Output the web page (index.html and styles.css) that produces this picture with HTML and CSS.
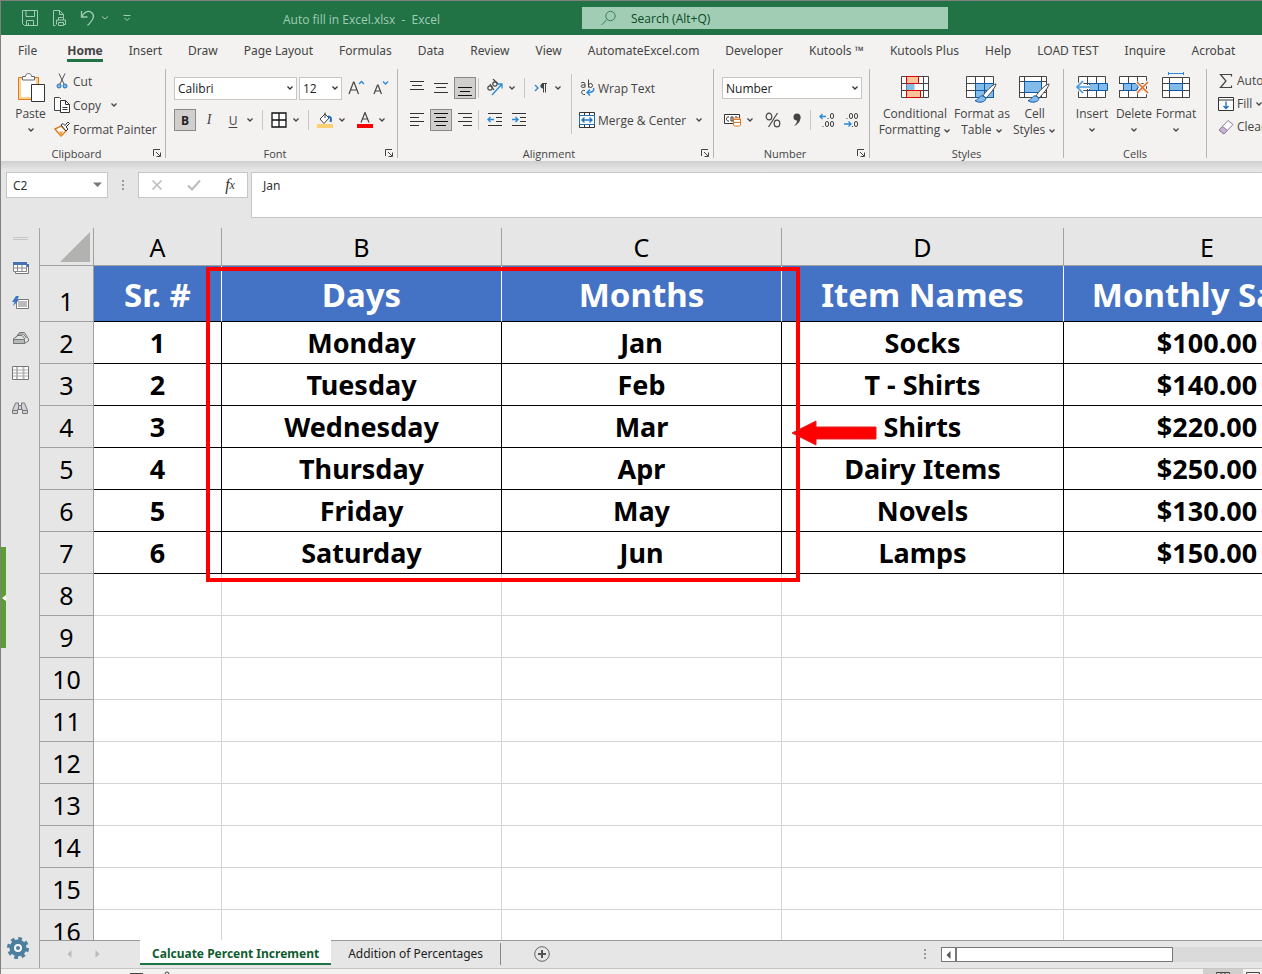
FILE: index.html
```html
<!DOCTYPE html>
<html lang="en">

<head>
    <meta charset="UTF-8">
    <meta name="viewport" content="width=device-width, initial-scale=1.0">
    <title>Auto fill in Excel.xlsx - Excel</title>
    <link rel="stylesheet" href="styles.css">
</head>

<body>

    <!-- Shared icons -->
    <svg class="defs" width="0" height="0" aria-hidden="true">
        <symbol id="chev" viewBox="0 0 8 6"><path d="M1.5 1.5 4 4l2.5-2.5" fill="none" stroke="#444" stroke-width="1.3" /></symbol>
        <symbol id="launch" viewBox="0 0 10 10"><path d="M1.5 8V1.5H8M4 4l4 4M8.500 4.500v4h-4" fill="none" stroke="#444" /></symbol>
        <symbol id="cells" viewBox="0 0 28 22"><path d="M.5.5h27v21H.5zM.5 7.500h27M.5 14.500h27M9.500.5v21M18.500.5v21" fill="#fff" stroke="#444" /></symbol>
        <symbol id="brush" viewBox="0 0 22 20"><path d="M21 1C18 1 10 9 8 13l3 2C14 12 21 4 21 1z" fill="#fff" stroke="#444" /><path d="M8 13c-4-1-4 4-8 4.500 3 3 11 2 11-2.500z" fill="#83bcea" stroke="#0f5aa8" /></symbol>
    </svg>

    <div class="app">

        <!-- Title bar -->
        <header class="titlebar">
            <div class="quick">
                <button aria-label="Save"><svg width="18" height="18" viewBox="0 0 18 18"><path d="M1.500 1.500h15v15h-13l-2-2zM5 1.500v6h8.500v-6M5.500 16.500v-5h7v5M7.500 14v2.500" /></svg></button>
                <button aria-label="Print preview"><svg width="18" height="18" viewBox="0 0 18 18"><path d="M5.500 16.500h-2v-15h6l4 4v2.500M9.500 1.500v4h4M8.500 11V8.500h5V11M6.500 15.500V11h9v4.500h-2M8.500 13.500h5v3h-5z" /></svg></button>
                <button aria-label="Undo"><svg width="18" height="18" viewBox="0 0 18 18"><path d="M2.500 2v6h6M2.500 8C5 3 9 1 12.500 3.500s2.500 7-4 13" stroke-width="1.300" /></svg></button>
                <button class="narrow" aria-label="Undo list"><svg width="8" height="6" viewBox="0 0 8 6"><path d="M1 1.500 4 4l3-2.500" /></svg></button>
                <button class="narrow last" aria-label="Customize toolbar"><svg width="8" height="8" viewBox="0 0 8 8"><path d="M.5 1.500h7M1.500 4 4 6.500 6.500 4" /></svg></button>
            </div>
            <div class="doc-title">Auto fill in Excel.xlsx&nbsp; -&nbsp; Excel</div>
            <label class="search">
                <svg width="16" height="16" viewBox="0 0 16 16"><circle cx="9.500" cy="6" r="4.700" /><path d="M6 9.500.5 15" /></svg>
                <input type="text" placeholder="Search (Alt+Q)" aria-label="Search">
            </label>
        </header>

        <!-- Ribbon tabs -->
        <nav class="tabs">
            <a href="#" class="file">File</a>
            <a href="#" class="active">Home</a>
            <a href="#">Insert</a>
            <a href="#">Draw</a>
            <a href="#">Page Layout</a>
            <a href="#">Formulas</a>
            <a href="#">Data</a>
            <a href="#">Review</a>
            <a href="#">View</a>
            <a href="#">AutomateExcel.com</a>
            <a href="#">Developer</a>
            <a href="#">Kutools ™</a>
            <a href="#">Kutools Plus</a>
            <a href="#">Help</a>
            <a href="#">LOAD TEST</a>
            <a href="#">Inquire</a>
            <a href="#">Acrobat</a>
        </nav>

        <!-- Ribbon -->
        <div class="ribbon">

            <section class="group clipboard">
                <div class="group-body">
                    <button class="big">
                        <svg width="28" height="31" viewBox="0 0 28 31"><path d="M1.500 5.500h20v22h-20z" fill="#fdd28c" stroke="#dd7b1e" /><path d="M4 7h15v18H4z" fill="#fff" /><path d="M5.500 8V4.500h3c0-4 6-4 6 0h3V8z" fill="#fff" stroke="#666" /><path d="M14.500 12.500h13v17h-13z" fill="#fff" stroke="#333" /></svg>
                        <span>Paste</span>
                        <svg class="chev"><use href="#chev" /></svg>
                    </button>
                    <div class="stack">
                        <button class="item"><svg width="16" height="16" viewBox="0 0 16 16"><path d="M5 .5 10 11M11 .5 6 11" fill="none" stroke="#555" /><circle cx="5" cy="13" r="2" fill="#83bcea" stroke="#1e6fbe" /><circle cx="11" cy="13" r="2" fill="#83bcea" stroke="#1e6fbe" /></svg>Cut</button>
                        <button class="item"><svg width="16" height="16" viewBox="0 0 16 16"><path d="M6 13.500H.5v-13h5L7 2" fill="#fff" stroke="#444" /><path d="M6.500 3.500h5l4 4v8h-9zM11.500 3.500v4h4M8.500 10.500h5M8.500 12.500h5" fill="#fff" stroke="#333" /></svg>Copy <svg class="chev"><use href="#chev" /></svg></button>
                        <button class="item"><svg width="16" height="16" viewBox="0 0 16 16"><path d="M1 8 7 5l5 5-5 5z" fill="#fff" stroke="#dd7b1e" stroke-width="1.400" /><path d="M4 11.500 9 10l-2 5z" fill="#f9a03f" /><path d="m7 4 2-1.500 2 2L14 1l1.500 1.500L12 6l2 2-2 2z" fill="#fff" stroke="#333" /></svg>Format Painter</button>
                    </div>
                </div>
                <footer><span>Clipboard</span><button aria-label="Clipboard options"><svg width="10" height="10"><use href="#launch" /></svg></button></footer>
            </section>

            <section class="group font">
                <div class="group-body rows">
                    <div class="row">
                        <select class="family" aria-label="Font"><option>Calibri</option></select>
                        <select class="size" aria-label="Font size"><option>12</option></select>
                        <button class="tb" aria-label="Increase font size"><svg width="18" height="18" viewBox="0 0 18 18"><path d="m2 15 4.500-12h.5l4.500 12M3.500 11h6.500" fill="none" stroke="#444" stroke-width="1.200" /><path d="m12 5 2.500-2.500L17 5" fill="none" stroke="#2b88d8" stroke-width="1.300" /></svg></button>
                        <button class="tb" aria-label="Decrease font size"><svg width="18" height="18" viewBox="0 0 18 18"><path d="m3 15 3.500-9h.5l3.500 9M4.500 12h5" fill="none" stroke="#444" stroke-width="1.200" /><path d="m12 2.500 2.500 2.500L17 2.500" fill="none" stroke="#2b88d8" stroke-width="1.300" /></svg></button>
                    </div>
                    <div class="row">
                        <button class="tb on bold">B</button>
                        <button class="tb italic">I</button>
                        <div class="split"><button class="tb underline">U</button><button class="dd" aria-label="Underline styles"><svg class="chev"><use href="#chev" /></svg></button></div>
                        <i class="sep"></i>
                        <div class="split"><button class="tb" aria-label="Borders"><svg width="16" height="16" viewBox="0 0 16 16"><path d="M1 1h14v14H1zM8 1v14M1 8h14" fill="#fff" stroke="#111" stroke-width="1.300" /></svg></button><button class="dd" aria-label="Border list"><svg class="chev"><use href="#chev" /></svg></button></div>
                        <i class="sep"></i>
                        <div class="split"><button class="tb" aria-label="Fill color"><svg width="16" height="16" viewBox="0 0 16 16"><path d="m3 7 5-5 4 4-5 5.500zM8 2V.5M8 2v4" fill="#fff" stroke="#444" /><path d="M11 4.500c3 0 3.500 2 2.500 5.500" fill="none" stroke="#1e6fbe" stroke-width="2" /><path d="M0 12h16v4H0z" fill="#fbd174" /></svg></button><button class="dd" aria-label="Fill color list"><svg class="chev"><use href="#chev" /></svg></button></div>
                        <div class="split"><button class="tb" aria-label="Font color"><svg width="16" height="16" viewBox="0 0 16 16"><path d="m4 10.500 4-10 4 10M5.500 7h5" fill="none" stroke="#444" stroke-width="1.200" /><path d="M0 12h16v4H0z" fill="#f00" /></svg></button><button class="dd" aria-label="Font color list"><svg class="chev"><use href="#chev" /></svg></button></div>
                    </div>
                </div>
                <footer><span>Font</span><button aria-label="Font options"><svg width="10" height="10"><use href="#launch" /></svg></button></footer>
            </section>

            <section class="group alignment">
                <div class="group-body">
                    <div class="rows align-left">
                        <div class="row">
                            <button class="tb" aria-label="Top align"><svg width="16" height="16" viewBox="0 0 16 16"><path d="M1 1.500h14M3 5.500h10M1 9.500h14" stroke="#333" /></svg></button>
                            <button class="tb" aria-label="Middle align"><svg width="16" height="16" viewBox="0 0 16 16"><path d="M1 3.500h14M3 7.500h10M1 12.500h14" stroke="#333" /></svg></button>
                            <button class="tb on" aria-label="Bottom align"><svg width="16" height="16" viewBox="0 0 16 16"><path d="M1 7.500h14M3 11.500h10M1 15.500h14" stroke="#111" /></svg></button>
                            <i class="sep"></i>
                            <div class="split"><button class="tb" aria-label="Orientation"><svg width="18" height="18" viewBox="0 0 18 18"><g fill="none" stroke="#444" stroke-width="1.200"><circle cx="4" cy="9" r="2.200" /><path d="m4 5 4 6" /><circle cx="9" cy="5" r="2.200" /><path d="M7 0l5 5" /></g><path d="M6 16 16 5M11.500 5H16v4.500" fill="none" stroke="#2b88d8" stroke-width="1.300" /></svg></button><button class="dd" aria-label="Orientation list"><svg class="chev"><use href="#chev" /></svg></button></div>
                            <i class="sep"></i>
                            <div class="split"><button class="tb" aria-label="Text direction"><svg width="14" height="12" viewBox="0 0 14 12"><path d="m1 3 3 3-3 3" fill="none" stroke="#2b88d8" stroke-width="1.400" /><path d="M9 6.500C5.500 6.500 5.500 1.500 9 1.500z" fill="#444" /><path d="M8 1.500h5M9.500 1.500v9M11.500 1.500v9" stroke="#444" /></svg></button><button class="dd" aria-label="Direction list"><svg class="chev"><use href="#chev" /></svg></button></div>
                        </div>
                        <div class="row">
                            <button class="tb" aria-label="Align left"><svg width="16" height="16" viewBox="0 0 16 16"><path d="M1 1.500h14M1 5.500h9M1 9.500h14M1 13.500h9" stroke="#333" /></svg></button>
                            <button class="tb on" aria-label="Center"><svg width="16" height="16" viewBox="0 0 16 16"><path d="M1 1.500h14M3 5.500h10M1 9.500h14M3 13.500h10" stroke="#111" /></svg></button>
                            <button class="tb" aria-label="Align right"><svg width="16" height="16" viewBox="0 0 16 16"><path d="M1 1.500h14M6 5.500h9M1 9.500h14M6 13.500h9" stroke="#333" /></svg></button>
                            <i class="sep"></i>
                            <button class="tb" aria-label="Decrease indent"><svg width="16" height="16" viewBox="0 0 16 16"><path d="M1 1.500h14M9 5.500h6M9 9.500h6M1 13.500h14" stroke="#333" /><path d="M7 7.500H1M3.500 5 1 7.500 3.500 10" fill="none" stroke="#2b88d8" stroke-width="1.400" /></svg></button>
                            <button class="tb" aria-label="Increase indent"><svg width="16" height="16" viewBox="0 0 16 16"><path d="M1 1.500h14M9 5.500h6M9 9.500h6M1 13.500h14" stroke="#333" /><path d="M1 7.500h6M4.500 5 7 7.500 4.500 10" fill="none" stroke="#2b88d8" stroke-width="1.400" /></svg></button>
                        </div>
                    </div>
                    <div class="rows align-right">
                        <button class="item"><svg width="16" height="18" viewBox="0 0 16 18"><g fill="none" stroke="#444"><path d="M2 4c3-1.500 4 0 4 1v3.500M6 6C3 5.500 1.500 6.500 2 7.500S5 9 6 7.500M9.500.5v8" /><circle cx="11.500" cy="6.500" r="2" /><path d="M6 11.500c-4-1.500-5 4.500 0 4" /></g><path d="M14.500 9c1 3-1 4.500-6 4.500M11 10.500l-3 3 3 3" fill="none" stroke="#2b88d8" stroke-width="1.400" /></svg>Wrap Text</button>
                        <button class="item"><svg width="16" height="16" viewBox="0 0 16 16"><path d="M.5.5h15v15H.5zM5.500.5v15M10.500.5v15" fill="#fff" stroke="#333" /><path d="M.5 3.500h15v9H.5z" fill="#fff" stroke="#1e6fbe" /><path d="M3 8h10M5.500 5.500 3 8l2.500 2.500M10.500 5.500 13 8l-2.500 2.500" fill="none" stroke="#1e6fbe" stroke-width="1.300" /></svg>Merge &amp; Center <svg class="chev"><use href="#chev" /></svg></button>
                    </div>
                </div>
                <footer><span>Alignment</span><button aria-label="Alignment options"><svg width="10" height="10"><use href="#launch" /></svg></button></footer>
            </section>

            <section class="group number">
                <div class="group-body rows">
                    <select aria-label="Number format"><option>Number</option></select>
                    <div class="row">
                        <div class="split"><button class="tb" aria-label="Accounting format"><svg width="18" height="14" viewBox="0 0 18 14"><path d="M.5 1.500h15v9H.5z" fill="#fff" stroke="#333" /><path d="M5 4C3 3.500 2.500 5 2.500 6S3.500 8.500 5 8M7 4v4h2V4zM11 4h2v2" fill="none" stroke="#333" /><path d="M9.500 6c0-1.500 7-1.500 7 0v6c0 1.500-7 1.500-7 0z" fill="#fff" stroke="#dd7b1e" /><path d="M9.500 6.500h7M9.500 9.500h7" stroke="#dd7b1e" /></svg></button><button class="dd" aria-label="Accounting list"><svg class="chev"><use href="#chev" /></svg></button></div>
                        <button class="tb" aria-label="Percent style"><svg width="16" height="16" viewBox="0 0 16 16"><g fill="none" stroke="#444" stroke-width="1.200"><ellipse cx="4" cy="4.500" rx="2.800" ry="3.300" /><ellipse cx="12" cy="11.500" rx="2.800" ry="3.300" /><path d="M12.500 1 3.500 15" /></g></svg></button>
                        <button class="tb" aria-label="Comma style"><svg width="10" height="14" viewBox="0 0 10 14"><circle cx="5" cy="4" r="3.500" fill="#444" /><path d="M8.500 4c0 5-3 7.500-6.500 9 2-2 3.500-4 3-7z" fill="#444" /></svg></button>
                        <i class="sep"></i>
                        <button class="tb" aria-label="Increase decimal"><svg width="16" height="16" viewBox="0 0 16 16"><path d="M7 4.500H1M3.500 2 1 4.500 3.500 7" fill="none" stroke="#2b88d8" stroke-width="1.300" /><g fill="none" stroke="#444"><rect x="11.500" y="1.500" width="3" height="5" rx="1.500" /><rect x="6.500" y="9.500" width="3" height="5" rx="1.500" /><rect x="11.500" y="9.500" width="3" height="5" rx="1.500" /><path d="M8.500 6.500h1M3.500 14.500h1" /></g></svg></button>
                        <button class="tb" aria-label="Decrease decimal"><svg width="16" height="16" viewBox="0 0 16 16"><path d="M1 12h7M5.500 9.500 8 12l-2.500 2.500" fill="none" stroke="#2b88d8" stroke-width="1.300" /><g fill="none" stroke="#444"><rect x="6.500" y="1.500" width="3" height="5" rx="1.500" /><rect x="11.500" y="1.500" width="3" height="5" rx="1.500" /><rect x="11.500" y="9.500" width="3" height="5" rx="1.500" /><path d="M3.500 6.500h1M9 14.500h1" /></g></svg></button>
                    </div>
                </div>
                <footer><span>Number</span><button aria-label="Number options"><svg width="10" height="10"><use href="#launch" /></svg></button></footer>
            </section>

            <section class="group styles">
                <div class="group-body">
                    <button class="big">
                        <svg width="28" height="31" viewBox="0 0 28 31"><g transform="translate(0 4)"><path d="M.5.5h27v21H.5zM.5 7.500h27M.5 14.500h27M5.500.5v21M22.500.5v21" fill="#fff" stroke="#444" /><path d="M5.500 7.500h8v7h-8z" fill="#83bcea" /><path d="M5.500.5h12v7h-12zM5.500 14.500h14v7h-14z" fill="#f8c49b" stroke="#d00" /></g></svg>
                        <span>Conditional<br>Formatting <svg class="chev"><use href="#chev" /></svg></span>
                    </button>
                    <button class="big">
                        <svg width="32" height="31" viewBox="0 0 32 31"><use href="#cells" x="0" y="4" width="28" height="22" /><path d="M9.500 11.500h18v14h-18zM18.500 11.500v14M9.500 18.500h18" fill="#83bcea" stroke="#0f5aa8" /><use href="#brush" x="9" y="11" width="22" height="20" /></svg>
                        <span>Format as<br>Table <svg class="chev"><use href="#chev" /></svg></span>
                    </button>
                    <button class="big">
                        <svg width="32" height="31" viewBox="0 0 32 31"><path d="M.5 4.500h27v21H.5zM.5 9.500h27M.5 20.500h27M5.500 4.500v21M22.500 4.500v21" fill="#fff" stroke="#444" /><path d="M5.500 9.500h17v11h-17z" fill="#83bcea" stroke="#0f5aa8" /><use href="#brush" x="9" y="11" width="22" height="20" /></svg>
                        <span>Cell<br>Styles <svg class="chev"><use href="#chev" /></svg></span>
                    </button>
                </div>
                <footer><span>Styles</span></footer>
            </section>

            <section class="group cells">
                <div class="group-body">
                    <button class="big">
                        <svg width="32" height="31" viewBox="0 0 32 31"><use href="#cells" x="2" y="4" width="28" height="22" /><path d="M13.500 11.500h18v7h-18zM22.500 11.500v7" fill="#83bcea" stroke="#0f5aa8" /><path d="M14 15H1M7 9l-6 6 6 6" fill="none" stroke="#f3f2f1" stroke-width="4" /><path d="M14 15H1M7 9l-6 6 6 6" fill="none" stroke="#4a9be0" stroke-width="1.600" /></svg>
                        <span>Insert</span>
                        <svg class="chev"><use href="#chev" /></svg>
                    </button>
                    <button class="big">
                        <svg width="30" height="31" viewBox="0 0 30 31"><use href="#cells" x="0" y="4" width="28" height="22" /><path d="M0 12h4v6H0z" fill="#f3f2f1" /><path d="M4.500 11.500h12l3 3.500-3 3.500h-12zM12.500 11.500v7" fill="#83bcea" stroke="#0f5aa8" /><path d="m18 10 11 11M29 10 18 21" stroke="#f3f2f1" stroke-width="4" /><path d="m18 10 11 11M29 10 18 21" stroke="#e06a1e" stroke-width="1.500" /></svg>
                        <span>Delete</span>
                        <svg class="chev"><use href="#chev" /></svg>
                    </button>
                    <button class="big">
                        <svg width="28" height="31" viewBox="0 0 28 31"><path d="M.5 5.500h27v20H.5zM.5 11.500h27M.5 18.500h27M7.500 5.500v20M20.500 5.500v20" fill="#fff" stroke="#444" /><path d="M7.500 11.500h13v7h-13z" fill="#83bcea" stroke="#0f5aa8" /><path d="M6.500 0v3M21.500 0v3M6.500 1.500h15" stroke="#2b88d8" /></svg>
                        <span>Format</span>
                        <svg class="chev"><use href="#chev" /></svg>
                    </button>
                </div>
                <footer><span>Cells</span></footer>
            </section>

            <section class="group editing">
                <div class="stack">
                    <button class="item"><svg width="16" height="16" viewBox="0 0 16 16"><path d="M13.500 3.500v-2h-11L8 8l-5.500 6.500h11v-2" fill="none" stroke="#444" stroke-width="1.200" /></svg>AutoSum</button>
                    <button class="item"><svg width="16" height="16" viewBox="0 0 16 16"><path d="M.5 1.500h15v13H.5zM.5 4h15" fill="#fff" stroke="#333" /><path d="M8 5.500v7M5.500 10 8 12.500l2.500-2.500" fill="none" stroke="#1e6fbe" stroke-width="1.400" /></svg>Fill <svg class="chev"><use href="#chev" /></svg></button>
                    <button class="item"><svg width="16" height="16" viewBox="0 0 16 16"><path d="m1 11 9-9.500 5 4L6 15z" fill="#fff" stroke="#8c7b9c" /><path d="m1 11 3.500-3.500 5 4L6 15z" fill="#c9b3d2" stroke="#8c7b9c" /></svg>Clear</button>
                </div>
            </section>
        </div>

        <!-- Formula bar -->
        <div class="formula-bar">
            <div class="name-box"><input type="text" value="C2" aria-label="Name box"><button aria-label="Names"><svg width="9" height="6" viewBox="0 0 9 6"><path d="M0 .5h9L4.500 5z" fill="#777" /></svg></button></div>
            <i class="dots"></i>
            <div class="fx">
                <button aria-label="Cancel"><svg width="12" height="12" viewBox="0 0 12 12"><path d="m1.500 1.500 9 9M10.500 1.500l-9 9" stroke="#bbb" stroke-width="1.600" /></svg></button>
                <button aria-label="Enter"><svg width="14" height="12" viewBox="0 0 14 12"><path d="m1 6.500 4 4 8-9" fill="none" stroke="#bbb" stroke-width="2" /></svg></button>
                <button class="fn" aria-label="Insert function">f<small>x</small></button>
            </div>
            <textarea aria-label="Formula">Jan</textarea>
        </div>

        <div class="workspace">
            <!-- Side pane -->
            <aside class="side">
                <i class="grip"></i>
                <button aria-label="Workbooks"><svg width="17" height="14" viewBox="0 0 17 14"><path d="M3.500 4.500h13v8h-13z" fill="#fff" stroke="#777" /><path d="M1.500 1.500h13v9h-13zM1.500 7h13M5.500 4v6.500M10 4v6.500" fill="#fff" stroke="#888" /><path d="M1 1h14v3H1zM15 3h2v3h-2z" fill="#4472b8" /></svg></button>
                <button aria-label="AutoText"><svg width="17" height="14" viewBox="0 0 17 14"><path d="M4.500 3.500h12v9h-12z" fill="#fff" stroke="#777" /><path d="M6 5h9v6H6z" fill="#bbb" /><path d="M4 0h3L5 4h2L1 10l1.500-4H0z" fill="#3c76c4" /></svg></button>
                <button aria-label="Resource library"><svg width="17" height="14" viewBox="0 0 17 14"><path d="M5 5.500 7.500 1.500h5L16.500 8v2l-4 2.500h-11V7.500z" fill="#e2e2e2" stroke="#777" /><path d="M4 6 6.500 3h5l3 4M3 7l2.500-2.500H10L13 8" fill="none" stroke="#777" /><path d="M1.500 8.500h11v4h-11z" fill="#b4bab8" stroke="#777" /></svg></button>
                <button aria-label="Column list"><svg width="17" height="14" viewBox="0 0 17 14"><path d="M.5.5h16v13H.5z" fill="#fff" stroke="#777" /><path d="M5 1v12M11.500 1v12" stroke="#bbb" stroke-width="2" /><path d="M1 4h15M1 7h15M1 10h15" stroke="#aaa" /></svg></button>
                <button aria-label="Find and replace"><svg width="16" height="14" viewBox="0 0 16 14"><path d="M.5 12.500v-3L3.500 2h3v2.500h3V2h3l3 7.500v3h-5v-4h-5v4zM.5 9.500h5M10.500 9.500h5M6.500 4.500v4M9.500 4.500v4" fill="#d2d2da" stroke="#777" /></svg></button>
                <button class="gear" aria-label="Settings"><svg width="22" height="22" viewBox="0 0 22 22"><circle cx="11" cy="11" r="9" fill="none" stroke="#4b7f9d" stroke-width="4" stroke-dasharray="3.500 3.570" /><circle cx="11" cy="11" r="6" fill="none" stroke="#4b7f9d" stroke-width="5" /><circle cx="11" cy="11" r="4" fill="#f5f5f5" /><circle cx="11" cy="11" r="2" fill="#4b7f9d" /></svg></button>
                <button class="handle" aria-label="Expand pane"><svg width="4" height="6" viewBox="0 0 4 6"><path d="M4 0v6L0 3z" fill="#fff" /></svg></button>
            </aside>

            <main class="book">
                <div class="grid">
                    <table>
                        <colgroup>
                            <col class="c-head"><col class="c-a"><col class="c-b"><col class="c-b"><col class="c-d"><col class="c-e">
                        </colgroup>
                        <thead>
                            <tr>
                                <th class="corner"><svg width="30" height="30" viewBox="0 0 30 30"><path d="M30 0v30H0z" fill="#b2b2b0" /></svg></th>
                                <th>A</th><th>B</th><th>C</th><th>D</th><th>E</th>
                            </tr>
                        </thead>
                        <tbody>
                            <tr class="title"><th>1</th><td>Sr. #</td><td>Days</td><td>Months</td><td>Item Names</td><td>Monthly Sales</td></tr>
                            <tr class="data"><th>2</th><td>1</td><td>Monday</td><td>Jan</td><td>Socks</td><td>$100.00</td></tr>
                            <tr class="data"><th>3</th><td>2</td><td>Tuesday</td><td>Feb</td><td>T - Shirts</td><td>$140.00</td></tr>
                            <tr class="data"><th>4</th><td>3</td><td>Wednesday</td><td>Mar</td><td>Shirts</td><td>$220.00</td></tr>
                            <tr class="data"><th>5</th><td>4</td><td>Thursday</td><td>Apr</td><td>Dairy Items</td><td>$250.00</td></tr>
                            <tr class="data"><th>6</th><td>5</td><td>Friday</td><td>May</td><td>Novels</td><td>$130.00</td></tr>
                            <tr class="data"><th>7</th><td>6</td><td>Saturday</td><td>Jun</td><td>Lamps</td><td>$150.00</td></tr>
                            <tr><th>8</th><td></td><td></td><td></td><td></td><td></td></tr>
                            <tr><th>9</th><td></td><td></td><td></td><td></td><td></td></tr>
                            <tr><th>10</th><td></td><td></td><td></td><td></td><td></td></tr>
                            <tr><th>11</th><td></td><td></td><td></td><td></td><td></td></tr>
                            <tr><th>12</th><td></td><td></td><td></td><td></td><td></td></tr>
                            <tr><th>13</th><td></td><td></td><td></td><td></td><td></td></tr>
                            <tr><th>14</th><td></td><td></td><td></td><td></td><td></td></tr>
                            <tr><th>15</th><td></td><td></td><td></td><td></td><td></td></tr>
                            <tr><th>16</th><td></td><td></td><td></td><td></td><td></td></tr>
                        </tbody>
                    </table>
                    <div class="highlight"></div>
                    <svg class="arrow" width="86" height="26" viewBox="0 0 86 26"><path d="M1 13 25 1v6h60v12H25v6z" fill="#f00" stroke="#d22" /></svg>
                </div>

                <!-- Sheet tabs -->
                <div class="sheet-bar">
                    <button class="nav" aria-label="Previous sheet"><svg width="5" height="8" viewBox="0 0 5 8"><path d="M4.500 0v8L.5 4z" fill="#bbb" /></svg></button>
                    <button class="nav" aria-label="Next sheet"><svg width="5" height="8" viewBox="0 0 5 8"><path d="M.5 0v8l4-4z" fill="#bbb" /></svg></button>
                    <button class="sheet active">Calcuate Percent Increment</button>
                    <button class="sheet">Addition of Percentages</button>
                    <button class="add" aria-label="New sheet"><svg width="16" height="16" viewBox="0 0 16 16"><circle cx="8" cy="8" r="7.300" fill="none" stroke="#666" /><path d="M8 4v8M4 8h8" stroke="#555" stroke-width="2" /></svg></button>
                    <i class="dots"></i>
                    <div class="hscroll">
                        <button aria-label="Scroll left"><svg width="5" height="8" viewBox="0 0 5 8"><path d="M4.500 0v8L.5 4z" fill="#555" /></svg></button>
                        <div class="thumb"></div>
                    </div>
                </div>
            </main>
        </div>

        <!-- Status bar -->
        <div class="status">
            <svg class="macro" width="44" height="5" viewBox="0 0 44 5"><path d="M0 4h13v1H0z" fill="#444" /><circle cx="37" cy="5" r="2" fill="none" stroke="#444" /></svg>
            <button class="view on" aria-label="Normal view"><svg width="14" height="5" viewBox="0 0 14 5"><path d="M.5 5V3.500h13V5M5 3.500V5M9 3.500V5" fill="none" stroke="#444" /></svg></button>
            <button class="view" aria-label="Page layout view"><svg width="14" height="5" viewBox="0 0 14 5"><path d="M.5 5V3.500h13V5" fill="none" stroke="#444" /></svg></button>
        </div>
    </div>

</body>

</html>
```
FILE: styles.css
```css
* {
    box-sizing: border-box;
}

body {
    margin: 0;
    font-family: "Noto Sans", "Open Sans", sans-serif;
    font-size: 12px;
    color: #444;
    background: #e6e6e6;
}

button,
input,
select,
textarea {
    font: inherit;
    color: inherit;
    margin: 0;
    padding: 0;
    border: 0;
    border-radius: 0;
    background: none;
}

button {
    display: flex;
    align-items: center;
    justify-content: center;
    white-space: nowrap;
}

svg {
    display: block;
    flex: none;
}

.defs {
    display: none;
}

.app {
    display: flex;
    flex-direction: column;
    height: 100vh;
    overflow: hidden;
    border-left: 1px solid #808080;
    border-top: 1px solid #808080;
}

.chev {
    width: 8px;
    height: 6px;
}

/* Title bar */
.titlebar {
    display: grid;
    grid-template-columns: 282px 299px 366px 1fr;
    align-items: center;
    flex: none;
    height: 34px;
    background: #217346;
    color: #a0cdb4;
}

.quick {
    display: flex;
    align-items: center;
    gap: 11px;
    padding-left: 20px;
}

.quick svg,
.search svg {
    fill: none;
    stroke: #a0cdb4;
}

.quick .narrow {
    margin-left: -7px;
}

.quick .last {
    margin-left: 3px;
}

.doc-title {
    padding-top: 3px;
    font-family: "Open Sans", sans-serif;
}

.search {
    display: flex;
    align-items: center;
    gap: 14px;
    height: 22px;
    padding-left: 19px;
    background: #a0cdb4;
}

.search svg {
    stroke: #3c7d58;
}

.search input {
    flex: 1;
    outline: none;
    font-family: "Open Sans", sans-serif;
}

.search input::placeholder {
    color: #0b4a24;
    opacity: 1;
}

/* Ribbon tabs */
.tabs {
    display: flex;
    gap: 26px;
    flex: none;
    height: 31px;
    padding: 6px 0 4px 17px;
    background: #f3f2f1;
    white-space: nowrap;
}

.tabs a {
    color: #444;
    text-decoration: none;
    line-height: 19px;
}

.tabs .file {
    margin-right: 4px;
}

.tabs .active {
    font-weight: bold;
    border-bottom: 3px solid #217346;
}

/* Ribbon */
.ribbon {
    display: flex;
    flex: none;
    height: 95px;
    background: #f3f2f1;
    overflow: hidden;
    font-family: "Open Sans", sans-serif;
}

.group {
    display: flex;
    flex-direction: column;
    flex: none;
    margin: 3px 0;
    border-right: 1px solid #b5b5b5;
}

.group-body {
    display: flex;
    flex: 1;
    min-height: 0;
}

.group footer {
    display: flex;
    align-items: center;
    flex: none;
    height: 10px;
}

.group footer span {
    flex: 1;
    text-align: center;
    font-size: 11px;
}

.group footer button {
    width: 13px;
    justify-content: flex-start;
}

.clipboard {
    width: 165px;
}

.font {
    width: 232px;
}

.alignment {
    width: 316px;
}

.number {
    width: 156px;
}

.styles {
    width: 194px;
}

.cells {
    width: 143px;
}

.editing {
    flex: 1;
    border: 0;
    padding-left: 11px;
}

.big {
    flex-direction: column;
    justify-content: flex-start;
    gap: 3px;
    line-height: 16px;
    padding-top: 3px;
}

.big span .chev {
    display: inline-block;
    vertical-align: middle;
}

.big > .chev {
    margin-top: 2px;
}

.clipboard .big {
    width: 51px;
    padding-left: 8px;
}

.stack .item {
    height: 24px;
}

.editing .stack .item {
    height: 23px;
}

.item {
    justify-content: flex-start;
    gap: 3px;
}

.item .chev {
    margin-left: 6px;
}

.editing .item .chev {
    margin-left: 0;
}

.clipboard .stack {
    padding-left: 2px;
}

.rows {
    display: flex;
    flex-direction: column;
    gap: 10px;
    padding: 8px 0 0 8px;
}

.row {
    display: flex;
    align-items: center;
    height: 22px;
}

select {
    appearance: none;
    height: 23px;
    padding-left: 3px;
    border: 1px solid #c6c6c6;
    background: #fff url("data:image/svg+xml,%3Csvg xmlns='http://www.w3.org/2000/svg' width='8' height='6'%3E%3Cpath d='M1.500 1.500 4 4l2.500-2.500' fill='none' stroke='%23333' stroke-width='1.300'/%3E%3C/svg%3E") no-repeat right 2px center;
    color: #222;
}

.family {
    width: 123px;
    margin-right: 2px;
}

.size {
    width: 43px;
    margin-right: 3px;
}

.number select {
    width: 140px;
    height: 22px;
}

.tb {
    width: 22px;
    height: 22px;
    margin-right: 2px;
}

.tb.on {
    border: 1px solid #8a8a8a;
    background: #d0cfce;
    color: #222;
}

.bold {
    font-weight: bold;
}

.italic {
    font-family: "Liberation Serif", serif;
    font-style: italic;
    font-size: 14px;
}

.underline {
    text-decoration: underline;
    text-underline-offset: 2px;
}

.split {
    display: flex;
    margin-right: 6px;
}

.split .tb {
    margin-right: 0;
}

.dd {
    width: 12px;
}

.sep {
    width: 1px;
    height: 20px;
    margin-right: 5px;
    background: #c8c8c8;
}

.align-left {
    width: 173px;
}

.align-right {
    margin: 5px 0 14px;
    padding: 3px 0 0 7px;
    border-left: 1px solid #c8c8c8;
}

.align-right .item {
    flex: none;
    height: 22px;
}

.styles .group-body {
    padding-left: 9px;
    gap: 3px;
}

.styles .big:first-child {
    width: 72px;
}

.cells .group-body {
    padding-left: 7px;
}

.cells .big {
    width: 42px;
}

/* Formula bar */
.formula-bar {
    display: flex;
    align-items: flex-start;
    flex: none;
    height: 67px;
    padding: 11px 0 10px 5px;
    background: linear-gradient(#cfcfcf, #e6e6e6 9px);
    color: #333;
}

.name-box,
.fx {
    display: flex;
    align-items: center;
    height: 26px;
    border: 1px solid #c6c6c6;
    background: #fff;
}

.name-box {
    width: 102px;
    padding: 0 5px 0 6px;
}

.name-box input {
    flex: 1;
    min-width: 0;
}

.dots {
    width: 2px;
    height: 10px;
    background: repeating-linear-gradient(#999 0 2px, transparent 2px 4px);
}

.formula-bar .dots {
    margin: 8px 14px 0 14px;
}

.fx {
    width: 110px;
    justify-content: space-around;
    margin-right: 3px;
}

.fn {
    font-family: "Liberation Serif", serif;
    font-style: italic;
    font-size: 16px;
}

.fn small {
    font-size: 12px;
}

.formula-bar textarea {
    flex: 1;
    height: 46px;
    padding: 4px 11px;
    border: 1px solid #c6c6c6;
    border-right: 0;
    background: #fff;
    resize: none;
}

/* Side pane */
.workspace {
    display: flex;
    flex: 1;
    min-height: 0;
}

.side {
    position: relative;
    display: flex;
    flex-direction: column;
    align-items: center;
    gap: 21px;
    flex: none;
    width: 39px;
    padding: 9px 0 9px;
    border-right: 1px solid #a6a6a6;
}

.grip {
    width: 15px;
    height: 3px;
    border: 1px solid #c6c6c6;
    border-width: 1px 0;
}

.gear {
    margin: auto 5px 0 0;
}

.handle {
    position: absolute;
    left: 0;
    top: 319px;
    width: 5px;
    height: 101px;
    background: #5c9e31;
}

/* Sheet */
.book {
    display: flex;
    flex-direction: column;
    flex: 1;
    min-width: 0;
}

.grid {
    position: relative;
    flex: 1;
    min-height: 0;
    overflow: hidden;
    background: #fff;
}

table {
    width: 1311px;
    table-layout: fixed;
    border-collapse: separate;
    border-spacing: 0;
    color: #000;
}

.c-head {
    width: 54px;
}

.c-a {
    width: 128px;
}

.c-b {
    width: 280px;
}

.c-d {
    width: 282px;
}

.c-e {
    width: 287px;
}

th,
td {
    height: 42px;
    padding: 0;
    border-right: 1px solid #d4d4d4;
    border-bottom: 1px solid #d4d4d4;
    text-align: center;
    vertical-align: bottom;
    line-height: 40px;
    white-space: nowrap;
}

th {
    background: #e6e6e6;
    border-color: #a0a0a0;
    font-size: 25px;
    font-weight: normal;
}

thead th {
    height: 38px;
    line-height: 36px;
}

.corner svg {
    margin: 0 3px 3px auto;
}

.title th {
    height: 56px;
}

.title td {
    background: #4472c4;
    border-right-color: #fff;
    border-bottom-color: #000;
    color: #fff;
    font-size: 33px;
    font-weight: bold;
    line-height: 52px;
}

.data td {
    border-color: #000;
    font-size: 27px;
    font-weight: bold;
}

.highlight {
    position: absolute;
    left: 166px;
    top: 39px;
    width: 594px;
    height: 315px;
    border: 4px solid #f00;
}

.arrow {
    position: absolute;
    left: 751px;
    top: 192px;
}

/* Sheet tabs */
.sheet-bar {
    display: flex;
    flex: none;
    height: 28px;
    border-top: 1px solid #999;
    color: #222;
}

.nav {
    width: 28px;
    height: 26px;
}

.nav:first-child {
    margin-left: 15px;
}

.nav + .sheet {
    margin-left: 29px;
}

.sheet {
    height: 24px;
    padding: 0 17px;
}

.sheet.active {
    height: 25px;
    margin-top: -1px;
    padding: 3px 12px 0;
    border-bottom: 2px solid #217346;
    background: #fff;
    color: #0e5c2f;
    font-weight: bold;
}

.add {
    height: 22px;
    margin: 2px 0;
    padding: 0 33px;
    border-left: 1px solid #888;
}

.sheet-bar .dots {
    margin: 8px 15px 0 auto;
}

.hscroll {
    display: flex;
    width: 321px;
    height: 15px;
    margin-top: 6px;
    background: #dadada;
}

.hscroll button {
    width: 15px;
    border: 1px solid #777;
    background: #fff;
}

.thumb {
    width: 217px;
    border: 1px solid #777;
    background: #fff;
}

/* Status bar */
.status {
    display: flex;
    flex: none;
    height: 6px;
    border-top: 1px solid #c6c6c6;
    background: #f3f2f1;
}

.macro {
    margin: 0 auto 0 129px;
}

.view {
    width: 40px;
    height: 5px;
}

.view:last-child {
    width: 19px;
    overflow: hidden;
}

.view.on {
    background: #d0cfce;
}
```
